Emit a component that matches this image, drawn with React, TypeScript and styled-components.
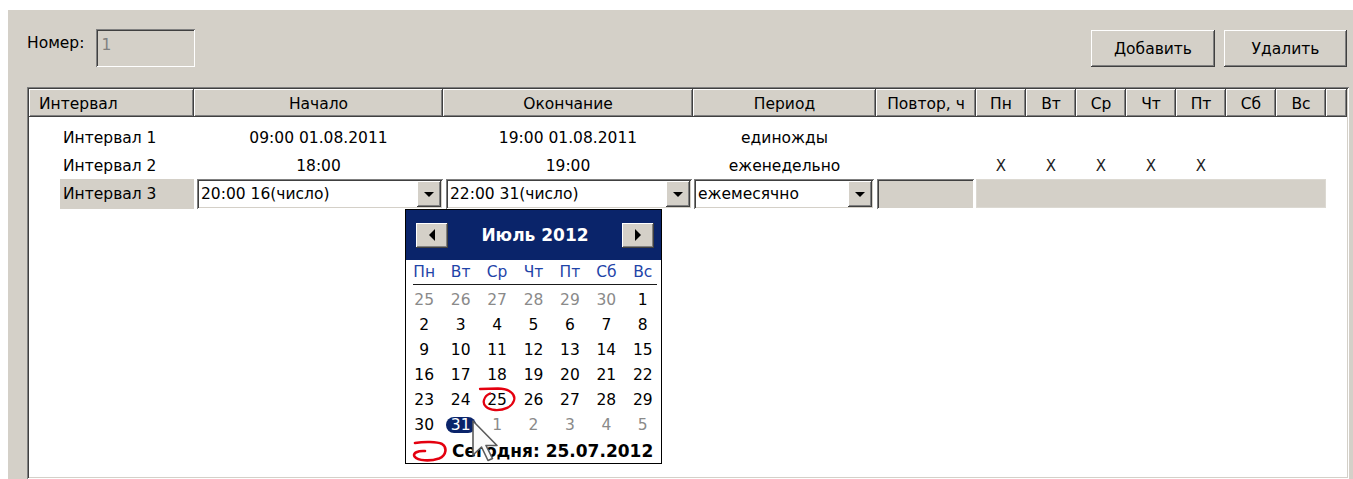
import React from "react";
import styled, { createGlobalStyle, css } from "styled-components";

const FACE = "#d4d0c8";
const SHADOW = "#808080";
const DARK = "#404040";
const NAVY = "#0a246a";
const COLUMNS = "165px 249px 250px 183px 100px repeat(7, 50px) 1fr";

const raised = css`
  box-shadow: inset -1px -1px ${DARK}, inset 1px 1px #fff, inset -2px -2px ${SHADOW},
    inset 2px 2px ${FACE};
`;

const sunken = css`
  box-shadow: inset 1px 1px ${SHADOW}, inset -1px -1px #fff, inset 2px 2px ${DARK},
    inset -2px -2px ${FACE};
`;

const GlobalStyle = createGlobalStyle`
  html, body {
    margin: 0;
    padding: 0;
    background: #fff;
    overflow: hidden;
  }
  body {
    font-family: "DejaVu Sans", "Liberation Sans", sans-serif;
    font-size: 15.5px;
    color: #000;
  }
`;

const Page = styled.div`
  height: 479px;
  box-sizing: border-box;
  padding: 10px 0 0 8px;
`;

const Panel = styled.div`
  height: 100%;
  box-sizing: border-box;
  background: ${FACE};
  padding: 19px 6px 0 19px;
  display: flex;
  flex-direction: column;
  overflow: hidden;
`;

const Toolbar = styled.div`
  display: flex;
  align-items: flex-start;
  height: 38px;
`;

const FieldLabel = styled.span`
  margin-top: 5px;
  line-height: 18px;
`;

const NumberBox = styled.div`
  margin-left: 12px;
  width: 99px;
  height: 38px;
  box-sizing: border-box;
  padding: 7px 0 0 5px;
  line-height: 18px;
  color: ${SHADOW};
  background: ${FACE};
  ${sunken};
`;

const Spacer = styled.div`
  flex: 1;
`;

const ToolButton = styled.button<{ $w: number }>`
  width: ${(p) => p.$w}px;
  height: 37px;
  margin: 1px 0 0 9px;
  border: none;
  padding: 0;
  background: ${FACE};
  font: inherit;
  color: #000;
  ${raised};
`;

const Frame = styled.div`
  margin: 20px -2px 0 0;
  flex: 1;
  padding: 2px;
  background: #fff;
  ${sunken};
`;

const HeaderRow = styled.div`
  display: grid;
  grid-template-columns: ${COLUMNS};
  height: 28px;
`;

const HeaderCell = styled.div<{ $left?: boolean }>`
  background: ${FACE};
  box-shadow: inset -1px -1px ${DARK}, inset 1px 1px #fff, inset -2px -2px ${SHADOW};
  padding: 3px ${(p) => (p.$left ? "0 0 10px" : "0 0 0")};
  line-height: 24px;
  text-align: ${(p) => (p.$left ? "left" : "center")};
  white-space: nowrap;
  overflow: hidden;
`;

const Body = styled.div`
  padding-top: 7px;
`;

const Row = styled.div<{ $h: number }>`
  display: grid;
  grid-template-columns: ${COLUMNS};
  height: ${(p) => p.$h}px;
`;

const Cell = styled.div`
  display: flex;
  align-items: center;
  justify-content: center;
  white-space: nowrap;
`;

const Mark = styled(Cell)`
  font-family: "DejaVu Sans", sans-serif;
  font-size: 15px;
  color: #222;
`;

const LabelCell = styled.div<{ $selected?: boolean }>`
  margin-left: 31px;
  padding-left: 3px;
  display: flex;
  align-items: center;
  white-space: nowrap;
  background: ${(p) => (p.$selected ? FACE : "transparent")};
  height: ${(p) => (p.$selected ? "30px" : "auto")};
`;

const Combo = styled.div<{ $ml: number; $mr: number }>`
  position: relative;
  margin: 0 ${(p) => p.$mr}px 0 ${(p) => p.$ml}px;
  height: 30px;
  box-sizing: border-box;
  padding: 2px;
  display: flex;
  align-items: stretch;
  background: #fff;
  ${sunken};
`;

const ComboText = styled.span`
  flex: 1;
  padding-left: 2px;
  line-height: 26px;
  white-space: nowrap;
  overflow: hidden;
`;

const DropButton = styled.span`
  width: 24px;
  display: flex;
  align-items: center;
  justify-content: center;
  background: ${FACE};
  ${raised};

  &::after {
    content: "";
    border-left: 5px solid transparent;
    border-right: 5px solid transparent;
    border-top: 5px solid #000;
  }
`;

const RepeatBox = styled.div`
  margin: 0 2px 0 1px;
  height: 30px;
  background: ${FACE};
  ${sunken};
`;

const DayBand = styled.div`
  grid-column: span 7;
  height: 29px;
  background: ${FACE};
  box-shadow: inset 0 0 0 1px #dcd9d2;
`;

const Popup = styled.div`
  position: absolute;
  left: 208px;
  top: 30px;
  z-index: 5;
  width: 257px;
  box-sizing: border-box;
  border: 1px solid #000;
  background: #fff;
`;

const CalHeader = styled.div`
  height: 50px;
  background: ${NAVY};
  display: flex;
  align-items: center;
  justify-content: space-between;
  padding: 0 7px 0 10px;
`;

const NavButton = styled.span<{ $dir: "left" | "right" }>`
  width: 32px;
  height: 25px;
  display: flex;
  align-items: center;
  justify-content: center;
  background: ${FACE};
  ${raised};

  &::after {
    content: "";
    border-top: 6px solid transparent;
    border-bottom: 6px solid transparent;
    ${(p) =>
      p.$dir === "left"
        ? "border-right: 6px solid #000;"
        : "border-left: 6px solid #000;"}
  }
`;

const CalTitle = styled.span`
  color: #fff;
  font-weight: bold;
  font-size: 17px;
`;

const WeekRow = styled.div`
  display: grid;
  grid-template-columns: repeat(7, 1fr);
  height: 24px;
  padding-top: 3px;
  box-sizing: border-box;
  color: #1f44a8;
  text-align: center;
`;

const WeekRule = styled.div`
  height: 1px;
  margin: 0 4px 0 7px;
  background: #1a1a1a;
`;

const DayGrid = styled.div`
  margin-top: 2px;
  display: grid;
  grid-template-columns: repeat(7, 1fr);
  grid-auto-rows: 25px;
`;

const Day = styled.div<{ $muted?: boolean }>`
  position: relative;
  display: flex;
  align-items: center;
  justify-content: center;
  color: ${(p) => (p.$muted ? "#8a8a8a" : "#000")};
`;

const SelectedDay = styled.span`
  background: ${NAVY};
  color: #fff;
  border-radius: 8px;
  padding: 0 5px;
  line-height: 16px;
`;

const Scribble = styled.svg`
  position: absolute;
  left: 0;
  top: 0;
  overflow: visible;
  pointer-events: none;
`;

const Footer = styled.div`
  height: 26px;
  padding: 2px 0 0 4px;
  box-sizing: border-box;
  display: flex;
  align-items: center;
  gap: 4px;
`;

const TodayText = styled.span`
  font-weight: bold;
  font-size: 17px;
`;

const Pointer = styled.svg`
  position: absolute;
  left: 66px;
  top: 210px;
  pointer-events: none;
`;

const WEEK = ["Пн", "Вт", "Ср", "Чт", "Пт", "Сб", "Вс"];

type DayItem = { n: number; muted?: boolean; selected?: boolean; circled?: boolean };

const days: DayItem[] = [
  ...[25, 26, 27, 28, 29, 30].map((n) => ({ n, muted: true })),
  ...Array.from({ length: 31 }, (_, i) => ({
    n: i + 1,
    selected: i + 1 === 31,
    circled: i + 1 === 25,
  })),
  ...[1, 2, 3, 4, 5].map((n) => ({ n, muted: true })),
];

const HEADERS = [
  "Начало",
  "Окончание",
  "Период",
  "Повтор, ч",
  "Пн",
  "Вт",
  "Ср",
  "Чт",
  "Пт",
  "Сб",
  "Вс",
  "",
];

function Calendar() {
  return (
    <Popup>
      <CalHeader>
        <NavButton $dir="left" />
        <CalTitle>Июль 2012</CalTitle>
        <NavButton $dir="right" />
      </CalHeader>
      <WeekRow>
        {WEEK.map((w) => (
          <span key={w}>{w}</span>
        ))}
      </WeekRow>
      <WeekRule />
      <DayGrid>
        {days.map((d, i) => (
          <Day key={i} $muted={d.muted}>
            {d.selected ? <SelectedDay>{d.n}</SelectedDay> : d.n}
            {d.circled && (
              <Scribble width="37" height="25" viewBox="0 0 37 25">
                <path
                  d="M1 2 L19 1.5 C30 1.5 37 7 35 13.5 C33 20 25 23.5 16 23 C8 22.5 3.5 18 5 13 C6 9.5 8.5 7.5 11 6.5"
                  fill="none"
                  stroke="#e4000f"
                  strokeWidth="2.3"
                  strokeLinecap="round"
                />
              </Scribble>
            )}
          </Day>
        ))}
      </DayGrid>
      <Footer>
        <svg width="38" height="22" viewBox="0 0 38 22">
          <path
            d="M5 3 C14 1.5 27 1.5 32 4 C37 7 37 15 29 18.5 C20 21.5 8 21 4.5 16.5 C2.5 13 8 10.5 15 11"
            fill="none"
            stroke="#e4000f"
            strokeWidth="2.6"
            strokeLinecap="round"
          />
        </svg>
        <TodayText>Сегодня: 25.07.2012</TodayText>
      </Footer>
      <Pointer width="28" height="42" viewBox="0 0 28 42">
        <polygon
          points="1,1 1,35 9.5,27 16,40.5 20.5,38.5 14,25.5 25,25.5"
          fill="#fafafa"
          stroke="#5a5a5a"
          strokeWidth="1.6"
          strokeLinejoin="round"
        />
      </Pointer>
    </Popup>
  );
}

export default function App() {
  return (
    <>
      <GlobalStyle />
      <Page>
        <Panel>
          <Toolbar>
            <FieldLabel>Номер:</FieldLabel>
            <NumberBox>1</NumberBox>
            <Spacer />
            <ToolButton $w={124}>Добавить</ToolButton>
            <ToolButton $w={123}>Удалить</ToolButton>
          </Toolbar>
          <Frame>
            <HeaderRow>
              <HeaderCell $left>Интервал</HeaderCell>
              {HEADERS.map((h, i) => (
                <HeaderCell key={i}>{h}</HeaderCell>
              ))}
            </HeaderRow>
            <Body>
              <Row $h={28}>
                <LabelCell>Интервал 1</LabelCell>
                <Cell>09:00 01.08.2011</Cell>
                <Cell>19:00 01.08.2011</Cell>
                <Cell>единожды</Cell>
              </Row>
              <Row $h={27}>
                <LabelCell>Интервал 2</LabelCell>
                <Cell>18:00</Cell>
                <Cell>19:00</Cell>
                <Cell>еженедельно</Cell>
                <Cell />
                {["X", "X", "X", "X", "X"].map((x, i) => (
                  <Mark key={i}>{x}</Mark>
                ))}
              </Row>
              <Row $h={30}>
                <LabelCell $selected>Интервал 3</LabelCell>
                <Combo $ml={3} $mr={0}>
                  <ComboText>20:00 16(число)</ComboText>
                  <DropButton />
                  <Calendar />
                </Combo>
                <Combo $ml={3} $mr={1}>
                  <ComboText>22:00 31(число)</ComboText>
                  <DropButton />
                </Combo>
                <Combo $ml={1} $mr={2}>
                  <ComboText>ежемесячно</ComboText>
                  <DropButton />
                </Combo>
                <RepeatBox />
                <DayBand />
              </Row>
            </Body>
          </Frame>
        </Panel>
      </Page>
    </>
  );
}
